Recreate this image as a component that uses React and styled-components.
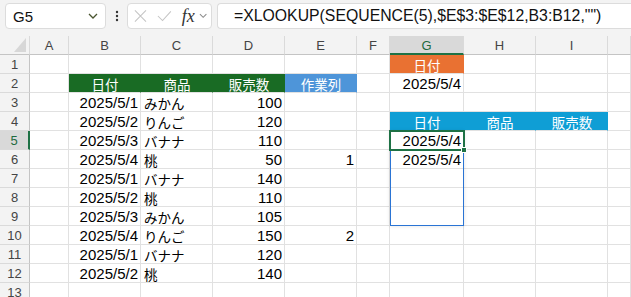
import React from 'react'
import styled, { createGlobalStyle } from 'styled-components'

const GlobalStyle = createGlobalStyle`
    html, body {
        margin: 0;
        padding: 0;
        background: #ffffff;
        overflow: hidden;
    }
    body {
        font-family: "Liberation Sans", "Noto Sans CJK JP", sans-serif;
        color: #000;
    }
`

const COLUMNS = ['A', 'B', 'C', 'D', 'E', 'F', 'G', 'H', 'I', '']

const FILLS = {
    green: '#196b24',
    blue: '#4e95d9',
    orange: '#e97132',
    cyan: '#0f9ed5',
}

// each row: { col: [text, align, fill, jp] }
const ROWS = [
    { G: ['日付', 'center', 'orange', true] },
    { B: ['日付', 'center', 'green', true], C: ['商品', 'center', 'green', true], D: ['販売数', 'center', 'green', true], E: ['作業列', 'center', 'blue', true], G: ['2025/5/4', 'right'] },
    { B: ['2025/5/1', 'right'], C: ['みかん', 'left', null, true], D: ['100', 'right'] },
    { B: ['2025/5/2', 'right'], C: ['りんご', 'left', null, true], D: ['120', 'right'], G: ['日付', 'center', 'cyan', true], H: ['商品', 'center', 'cyan', true], I: ['販売数', 'center', 'cyan', true] },
    { B: ['2025/5/3', 'right'], C: ['バナナ', 'left', null, true], D: ['110', 'right'], G: ['2025/5/4', 'right'] },
    { B: ['2025/5/4', 'right'], C: ['桃', 'left', null, true], D: ['50', 'right'], E: ['1', 'right'], G: ['2025/5/4', 'right'] },
    { B: ['2025/5/1', 'right'], C: ['バナナ', 'left', null, true], D: ['140', 'right'] },
    { B: ['2025/5/2', 'right'], C: ['桃', 'left', null, true], D: ['110', 'right'] },
    { B: ['2025/5/3', 'right'], C: ['みかん', 'left', null, true], D: ['105', 'right'] },
    { B: ['2025/5/4', 'right'], C: ['りんご', 'left', null, true], D: ['150', 'right'], E: ['2', 'right'] },
    { B: ['2025/5/1', 'right'], C: ['バナナ', 'left', null, true], D: ['120', 'right'] },
    { B: ['2025/5/2', 'right'], C: ['桃', 'left', null, true], D: ['140', 'right'] },
    {},
]

const ACTIVE_COL = 'G'
const ACTIVE_ROW = 5

const App = () => {
    return (
        <Page>
            <GlobalStyle />
            <FormulaBar>
                <NameBox>
                    <span>G5</span>
                    <svg width="10" height="6" viewBox="0 0 10 6">
                        <path d="M1 1 L5 5 L9 1" fill="none" stroke="#4a5530" strokeWidth="1.3" />
                    </svg>
                </NameBox>
                <Dots>
                    <svg width="4" height="12" viewBox="0 0 4 12">
                        <circle cx="2" cy="2" r="1.2" fill="#333" />
                        <circle cx="2" cy="6" r="1.2" fill="#333" />
                        <circle cx="2" cy="10" r="1.2" fill="#333" />
                    </svg>
                </Dots>
                <FnBox>
                    <svg width="14" height="14" viewBox="0 0 14 14">
                        <path d="M1 1 L13 13 M13 1 L1 13" stroke="#c4c4c4" strokeWidth="1.1" fill="none" />
                    </svg>
                    <svg width="16" height="12" viewBox="0 0 16 12">
                        <path d="M1 6 L6 11 L15 1" stroke="#c4c4c4" strokeWidth="1.1" fill="none" />
                    </svg>
                    <Fx>fx</Fx>
                    <svg width="9" height="6" viewBox="0 0 9 6">
                        <path d="M1 1 L4.5 4.5 L8 1" fill="none" stroke="#8a8a8a" strokeWidth="1.1" />
                    </svg>
                </FnBox>
                <FormulaInput>=XLOOKUP(SEQUENCE(5),$E$3:$E$12,B3:B12,"")</FormulaInput>
            </FormulaBar>
            <Sheet>
                <Corner>
                    <svg width="12" height="14" viewBox="0 0 12 14">
                        <path d="M12 0 L12 14 L0 14 Z" fill="#d7d7d7" />
                    </svg>
                </Corner>
                {COLUMNS.map((c, i) => (
                    <ColHeader key={`h${i}`} $active={c === ACTIVE_COL}>{c}</ColHeader>
                ))}
                {ROWS.map((row, r) => (
                    <React.Fragment key={`r${r}`}>
                        <RowHeader $row={r + 2} $active={r + 1 === ACTIVE_ROW}>{r + 1}</RowHeader>
                        {COLUMNS.map((c, i) => {
                            const cell = row[c]
                            if (!cell) return <Cell key={`c${r}-${i}`} $row={r + 2} $col={i + 2} />
                            const [text, align, fill, jp] = cell
                            return (
                                <Cell key={`c${r}-${i}`} $row={r + 2} $col={i + 2} $align={align} $fill={fill && FILLS[fill]} $jp={jp}>
                                    {text}
                                </Cell>
                            )
                        })}
                    </React.Fragment>
                ))}
                <SpillBox />
                <ActiveCell>
                    <FillHandle />
                </ActiveCell>
            </Sheet>
        </Page>
    )
}

const Page = styled.div`
    width: 631px;
    height: 297px;
    overflow: hidden;
    background: #fff;
`

const FormulaBar = styled.div`
    display: flex;
    align-items: flex-start;
    height: 36px;
    box-sizing: border-box;
    padding: 3px 0 0 5px;
    background: #f3f3f3;
`

const BoxBase = styled.div`
    height: 26px;
    box-sizing: border-box;
    background: #fff;
    border: 1px solid #dcdcdc;
    border-radius: 4px;
    display: flex;
    align-items: center;
`

const NameBox = styled(BoxBase)`
    width: 101px;
    justify-content: space-between;
    padding: 0 7px 0 7px;
    font-size: 15px;
    color: #111;
`

const Dots = styled.div`
    width: 21px;
    height: 26px;
    display: flex;
    align-items: center;
    justify-content: center;
`

const FnBox = styled(BoxBase)`
    width: 85px;
    padding: 0 4px 0 6px;
    gap: 8px;
    justify-content: flex-start;

    svg:nth-child(2) {
        margin-left: 2px;
    }
`

const Fx = styled.span`
    font-family: "Liberation Serif", serif;
    font-style: italic;
    font-size: 18px;
    color: #333;
    margin-left: 2px;
    margin-right: -4px;
`

const FormulaInput = styled(BoxBase)`
    flex: 1;
    margin-left: 5px;
    border-right: none;
    border-radius: 4px 0 0 4px;
    padding-left: 16px;
    font-size: 15.8px;
    color: #111;
    white-space: nowrap;
    overflow: hidden;
`

const Sheet = styled.div`
    display: grid;
    grid-template-columns: 30px 39px 72px 72px 72px 72px 33px 74px 72px 72px 1fr;
    grid-auto-rows: 19px;
    font-size: 15px;
`

const Corner = styled.div`
    grid-row: 1;
    grid-column: 1;
    background: #f3f3f3;
    border-right: 1px solid #dadada;
    border-bottom: 1px solid #c4c4c4;
    box-sizing: border-box;
    display: flex;
    align-items: flex-end;
    justify-content: flex-end;
    padding: 0 3px 2px 0;
`

const ColHeader = styled.div`
    grid-row: 1;
    box-sizing: border-box;
    background: ${p => (p.$active ? '#d9d9d9' : '#f3f3f3')};
    border-right: 1px solid #dadada;
    border-bottom: ${p => (p.$active ? '2px solid #1e7145' : '1px solid #c4c4c4')};
    color: ${p => (p.$active ? '#1e6b3e' : '#444')};
    font-size: 13px;
    display: flex;
    align-items: center;
    justify-content: center;
    padding-top: ${p => (p.$active ? '1px' : '0')};
`

const RowHeader = styled.div`
    grid-row: ${p => p.$row};
    grid-column: 1;
    box-sizing: border-box;
    background: ${p => (p.$active ? '#d9d9d9' : '#f3f3f3')};
    border-right: ${p => (p.$active ? '2px solid #1e7145' : '1px solid #c4c4c4')};
    border-bottom: 1px solid #dadada;
    color: ${p => (p.$active ? '#1e6b3e' : '#444')};
    font-size: 13px;
    display: flex;
    align-items: center;
    justify-content: center;
`

const Cell = styled.div`
    grid-row: ${p => p.$row};
    grid-column: ${p => p.$col};
    box-sizing: border-box;
    background: ${p => p.$fill || '#fff'};
    color: ${p => (p.$fill ? '#fff' : '#000')};
    border-right: 1px solid ${p => p.$fill || '#e1e1e1'};
    border-bottom: 1px solid #e1e1e1;
    display: flex;
    align-items: center;
    justify-content: ${p => (p.$align === 'right' ? 'flex-end' : p.$align === 'center' ? 'center' : 'flex-start')};
    padding: 1px 2px 0 3px;
    font-size: ${p => (p.$jp ? '13.5px' : '15px')};
    white-space: nowrap;
    overflow: hidden;
`

const SpillBox = styled.div`
    grid-column: 8;
    grid-row: 6 / 11;
    box-sizing: border-box;
    border: 1px solid #2a74d4;
    box-shadow: 0 0 4px rgba(0, 0, 0, 0.12);
    pointer-events: none;
`

const ActiveCell = styled.div`
    grid-column: 8;
    grid-row: 6;
    margin: -1px -1px -1px -1px;
    border: 2px solid #1e7145;
    position: relative;
    pointer-events: none;
`

const FillHandle = styled.div`
    position: absolute;
    right: -4px;
    bottom: -4px;
    width: 6px;
    height: 6px;
    background: #1e7145;
    border: 1px solid #fff;
    box-sizing: border-box;
`

export default App
